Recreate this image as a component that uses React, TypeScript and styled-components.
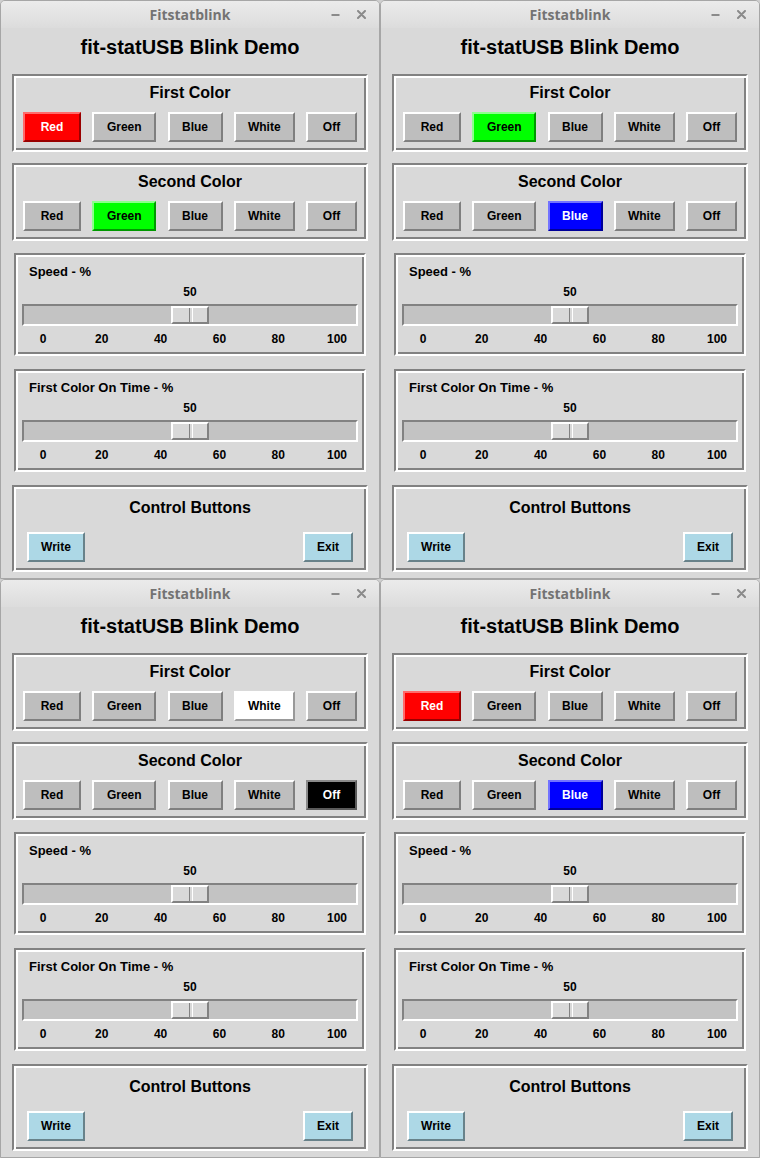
import React from "react";
import styled, { createGlobalStyle } from "styled-components";

const GlobalStyle = createGlobalStyle`
  html, body { margin: 0; padding: 0; background: #d9d9d9; }
  body { font-family: "Liberation Sans", Arial, sans-serif; }
  * { box-sizing: border-box; }
`;

const Desktop = styled.div`
  display: grid;
  grid-template-columns: 380px 380px;
  grid-template-rows: 579px 579px;
  width: 760px;
  height: 1158px;
  background: #cfcfcf;
`;

const Window = styled.div`
  display: flex;
  flex-direction: column;
  background: #d9d9d9;
  border: 1px solid #a6a6a6;
  border-radius: 5px 5px 0 0;
  overflow: hidden;
`;

const TitleBar = styled.div`
  display: grid;
  grid-template-columns: 1fr auto 1fr;
  align-items: center;
  height: 27px;
  background: linear-gradient(#ebebeb, #dcdcdc);
`;

const TitleText = styled.div`
  grid-column: 2;
  font-family: "Open Sans", "Noto Sans", sans-serif;
  font-weight: 700;
  font-size: 14px;
  color: #737373;
  line-height: 18px;
`;

const WindowControls = styled.div`
  grid-column: 3;
  justify-self: end;
  display: flex;
  align-items: center;
  gap: 17px;
  padding-right: 13px;
`;

const Heading = styled.h1`
  margin: 7px 0 15px;
  font-size: 20px;
  line-height: 24px;
  font-weight: bold;
  text-align: center;
  color: #000;
`;

const Group = styled.div<{ $mx: number; $mt: number; $pad: string }>`
  margin: ${(p) => p.$mt}px ${(p) => p.$mx}px 0;
  border: 2px solid;
  border-color: #828282 #ffffff #ffffff #828282;
  box-shadow: inset 2px 2px 0 #ffffff, inset -2px -2px 0 #828282;
  padding: ${(p) => p.$pad};
  display: flex;
  flex-direction: column;
`;

const GroupTitle = styled.div`
  font-size: 16px;
  line-height: 20px;
  font-weight: bold;
  text-align: center;
  color: #000;
`;

const ButtonRow = styled.div<{ $mt: number }>`
  display: flex;
  justify-content: space-between;
  margin-top: ${(p) => p.$mt}px;
`;

const TkButton = styled.button<{
  $w: number;
  $bg: string;
  $fg: string;
  $light: string;
  $dark: string;
}>`
  width: ${(p) => p.$w}px;
  height: 30px;
  padding: 0;
  border: 2px solid;
  border-color: ${(p) => p.$light} ${(p) => p.$dark} ${(p) => p.$dark} ${(p) => p.$light};
  background: ${(p) => p.$bg};
  color: ${(p) => p.$fg};
  font-family: "Liberation Sans", Arial, sans-serif;
  font-weight: bold;
  font-size: 12px;
  line-height: 14px;
  cursor: pointer;
`;

const SliderLabel = styled.div`
  font-size: 13px;
  line-height: 16px;
  font-weight: bold;
  color: #000;
  padding-left: 13px;
`;

const SliderValue = styled.div`
  margin: 5px 6px 0;
  font-size: 12px;
  line-height: 14px;
  font-weight: bold;
  text-align: center;
  color: #000;
`;

const Trough = styled.div`
  position: relative;
  margin: 5px 6px 0;
  height: 22px;
  border: 2px solid;
  border-color: #828282 #ffffff #ffffff #828282;
  background: #c3c3c3;
`;

const Thumb = styled.div`
  position: absolute;
  top: 0;
  width: 38px;
  height: 18px;
  background: #d9d9d9;
  border: 2px solid;
  border-color: #ffffff #828282 #828282 #ffffff;
  &::after {
    content: "";
    position: absolute;
    top: 0;
    bottom: 0;
    left: 16px;
    width: 2px;
    border-left: 1px solid #828282;
    border-right: 1px solid #ffffff;
  }
`;

const TickRow = styled.div`
  display: flex;
  justify-content: space-between;
  margin: 6px 12px 0;
`;

const Tick = styled.span`
  width: 30px;
  text-align: center;
  font-size: 12px;
  line-height: 14px;
  font-weight: bold;
  color: #000;
`;

type ColorName = "Red" | "Green" | "Blue" | "White" | "Off";

const COLORS: { name: ColorName; w: number }[] = [
  { name: "Red", w: 58 },
  { name: "Green", w: 64 },
  { name: "Blue", w: 55 },
  { name: "White", w: 61 },
  { name: "Off", w: 51 },
];

const SELECTED: Record<ColorName, { bg: string; fg: string; light: string; dark: string }> = {
  Red: { bg: "#ff0000", fg: "#ffffff", light: "#ff6b6b", dark: "#990000" },
  Green: { bg: "#00ff00", fg: "#000000", light: "#8cff8c", dark: "#009900" },
  Blue: { bg: "#0000ff", fg: "#ffffff", light: "#7373ff", dark: "#000099" },
  White: { bg: "#ffffff", fg: "#000000", light: "#ffffff", dark: "#999999" },
  Off: { bg: "#000000", fg: "#ffffff", light: "#8a8a8a", dark: "#5a5a5a" },
};

const NORMAL = { bg: "#bebebe", fg: "#000000", light: "#ffffff", dark: "#7f7f7f" };
const LIGHTBLUE = { bg: "#add8e6", fg: "#000000", light: "#ffffff", dark: "#68828a" };

function ColorGroup({ title, selected, mt }: { title: string; selected: ColorName; mt: number }) {
  return (
    <Group $mx={11} $mt={mt} $pad="7px 9px 8px">
      <GroupTitle>{title}</GroupTitle>
      <ButtonRow $mt={9}>
        {COLORS.map((c) => {
          const s = c.name === selected ? SELECTED[c.name] : NORMAL;
          return (
            <TkButton key={c.name} $w={c.w} $bg={s.bg} $fg={s.fg} $light={s.light} $dark={s.dark}>
              {c.name}
            </TkButton>
          );
        })}
      </ButtonRow>
    </Group>
  );
}

function SliderGroup({ label, value, mt }: { label: string; value: number; mt: number }) {
  return (
    <Group $mx={13} $mt={mt} $pad="9px 0 8px">
      <SliderLabel>{label}</SliderLabel>
      <SliderValue>{value}</SliderValue>
      <Trough>
        <Thumb style={{ left: `calc((100% - 38px) * ${value / 100})` }} />
      </Trough>
      <TickRow>
        {[0, 20, 40, 60, 80, 100].map((t) => (
          <Tick key={t}>{t}</Tick>
        ))}
      </TickRow>
    </Group>
  );
}

function MinimizeIcon() {
  return (
    <svg width="9" height="9" viewBox="0 0 9 9">
      <line x1="0.5" y1="5" x2="8.5" y2="5" stroke="#8a8a8a" strokeWidth="2" />
    </svg>
  );
}

function CloseIcon() {
  return (
    <svg width="9" height="9" viewBox="0 0 9 9">
      <path d="M1 1 L8 8 M8 1 L1 8" stroke="#8a8a8a" strokeWidth="2" strokeLinecap="round" />
    </svg>
  );
}

function BlinkWindow({ first, second }: { first: ColorName; second: ColorName }) {
  return (
    <Window>
      <TitleBar>
        <TitleText>Fitstatblink</TitleText>
        <WindowControls>
          <MinimizeIcon />
          <CloseIcon />
        </WindowControls>
      </TitleBar>
      <Heading>fit-statUSB Blink Demo</Heading>
      <ColorGroup title="First Color" selected={first} mt={0} />
      <ColorGroup title="Second Color" selected={second} mt={11} />
      <SliderGroup label="Speed - %" value={50} mt={12} />
      <SliderGroup label="First Color On Time - %" value={50} mt={13} />
      <Group $mx={11} $mt={13} $pad="11px 13px 8px">
        <GroupTitle>Control Buttons</GroupTitle>
        <ButtonRow $mt={14}>
          <TkButton $w={58} $bg={LIGHTBLUE.bg} $fg={LIGHTBLUE.fg} $light={LIGHTBLUE.light} $dark={LIGHTBLUE.dark}>
            Write
          </TkButton>
          <TkButton $w={50} $bg={LIGHTBLUE.bg} $fg={LIGHTBLUE.fg} $light={LIGHTBLUE.light} $dark={LIGHTBLUE.dark}>
            Exit
          </TkButton>
        </ButtonRow>
      </Group>
    </Window>
  );
}

const STATES: { first: ColorName; second: ColorName }[] = [
  { first: "Red", second: "Green" },
  { first: "Green", second: "Blue" },
  { first: "White", second: "Off" },
  { first: "Red", second: "Blue" },
];

export default function App() {
  return (
    <>
      <GlobalStyle />
      <Desktop>
        {STATES.map((s, i) => (
          <BlinkWindow key={i} first={s.first} second={s.second} />
        ))}
      </Desktop>
    </>
  );
}
